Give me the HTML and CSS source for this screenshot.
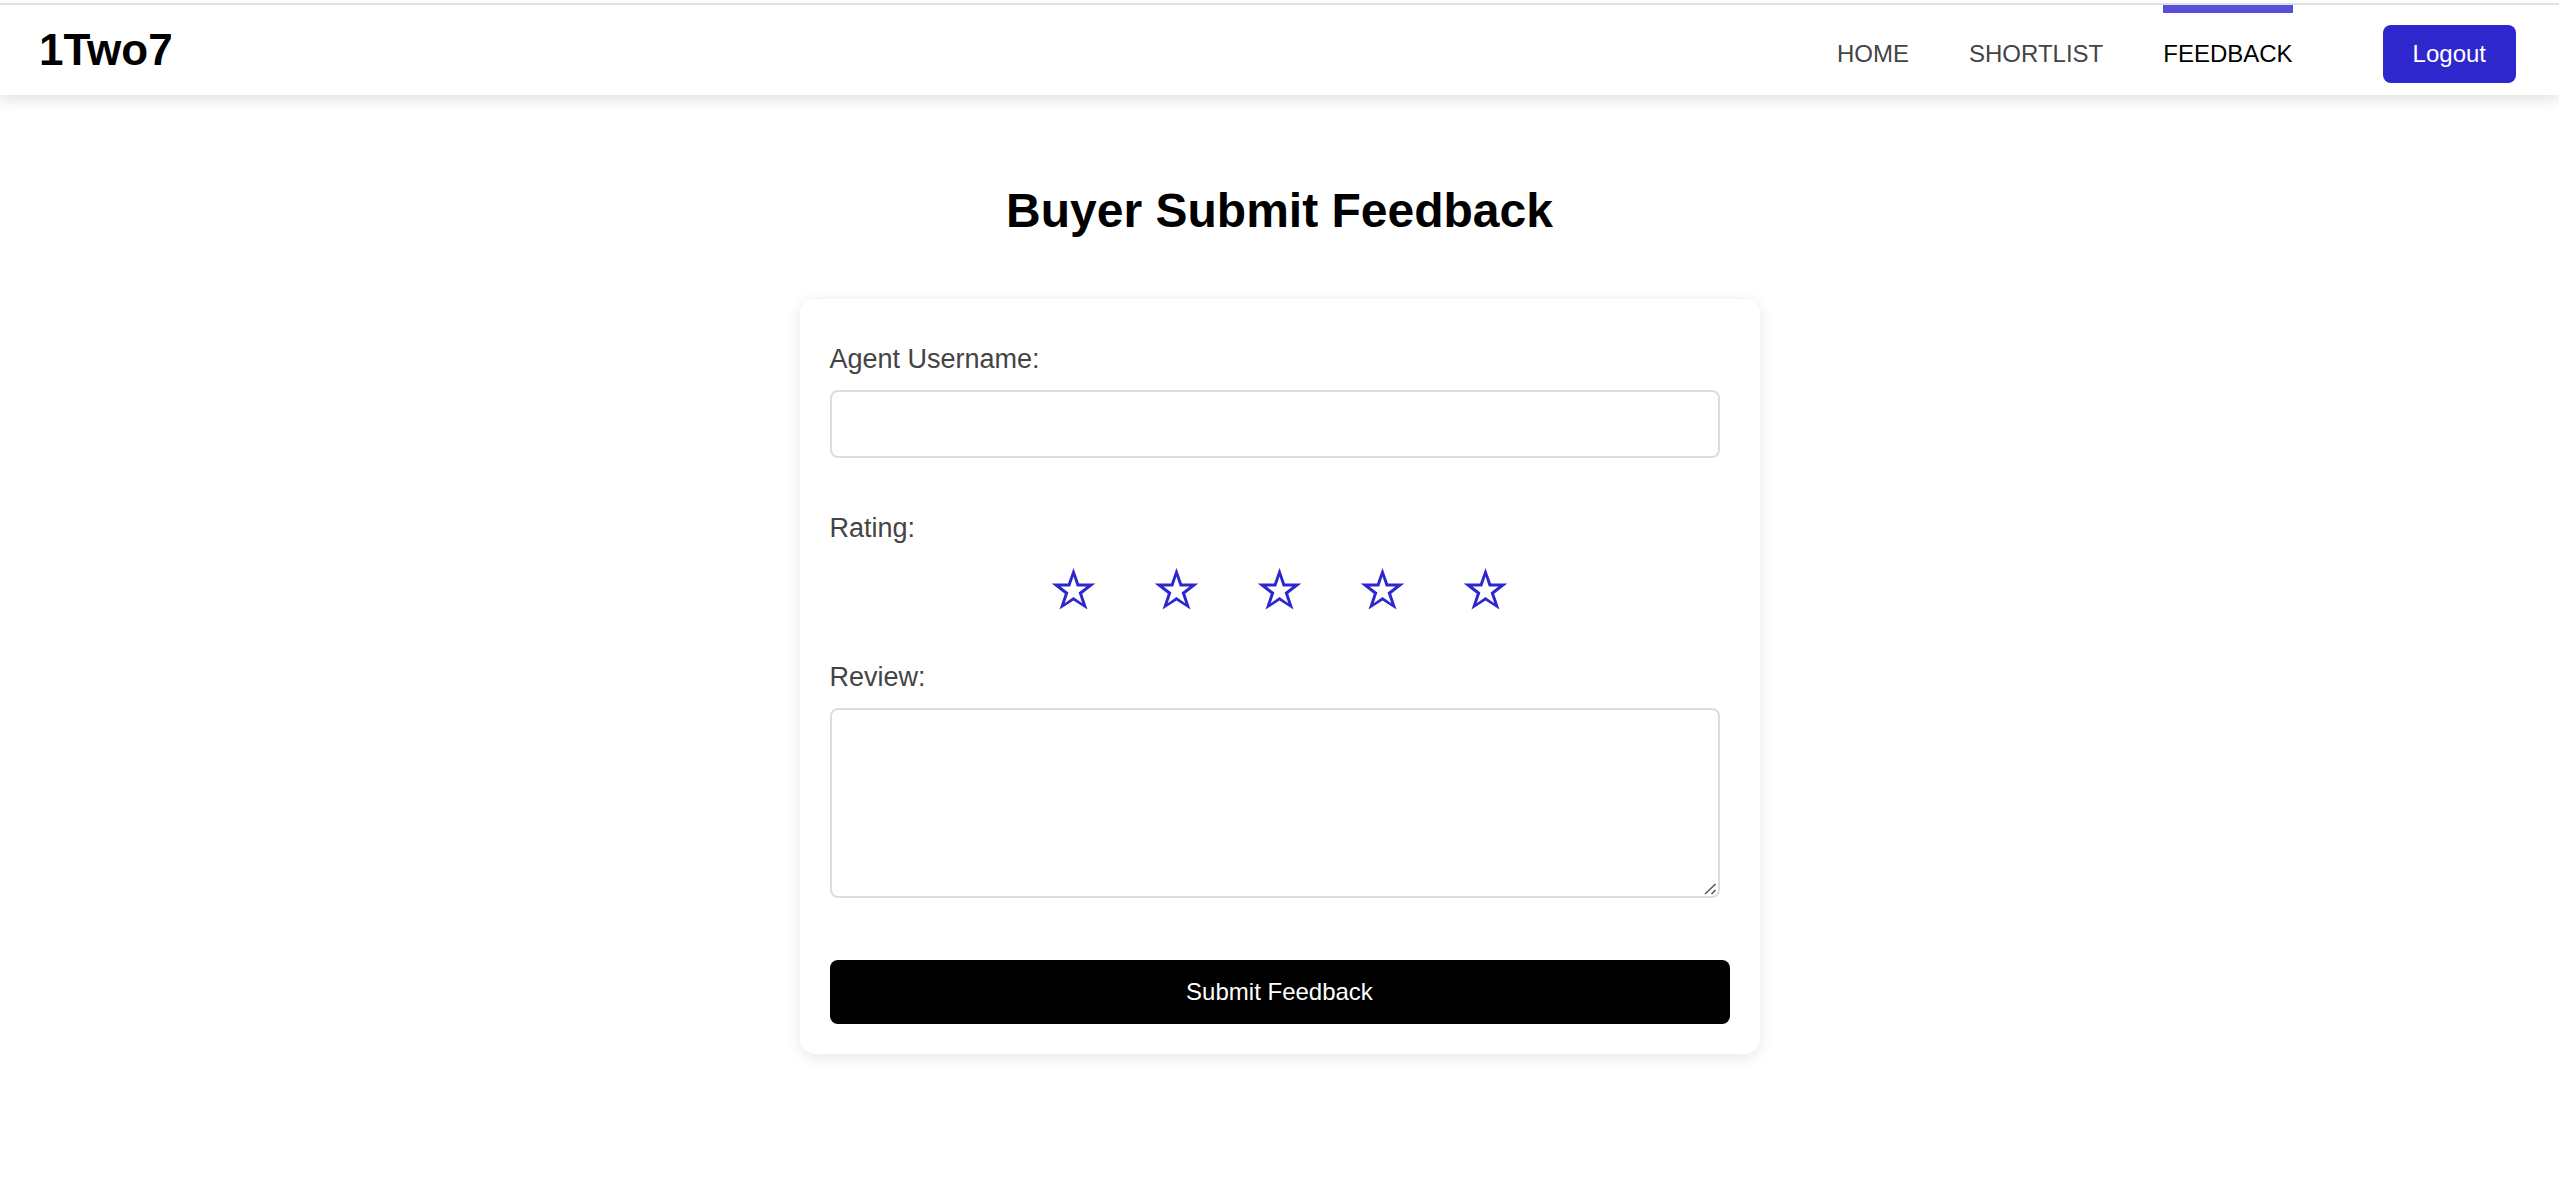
FILE: index.html
```html
<!DOCTYPE html>
<html lang="en">
<head>
  <meta charset="utf-8">
  <meta name="viewport" content="width=device-width, initial-scale=1">
  <title>Buyer Submit Feedback</title>
  <link rel="stylesheet" href="styles.css">
</head>
<body>
  <svg class="sprite" aria-hidden="true">
    <symbol id="star" viewBox="0 0 43 42">
      <path fill-rule="evenodd" d="M21.500 0L27 15.600H43.300L30.200 25.700L35.500 41.600L21.500 32.500L7.500 41.600L12.800 25.700L-.3 15.600H16ZM21.500 8.500L18.200 18.600H8.500L16.400 24.600L12.700 35.300L21.500 29.100L30.300 35.300L26.600 24.600L34.500 18.600H24.800Z"/>
    </symbol>
  </svg>

  <header class="site-header">
    <a class="logo" href="#">1Two7</a>
    <nav class="site-nav">
      <a class="nav-link" href="#">HOME</a>
      <a class="nav-link" href="#">SHORTLIST</a>
      <a class="nav-link nav-link-active" href="#" aria-current="page">FEEDBACK</a>
    </nav>
    <button class="logout" type="button">Logout</button>
  </header>

  <main class="page">
    <h1 class="page-title">Buyer Submit Feedback</h1>
    <form class="card">
      <div class="field">
        <label class="label" for="agent">Agent Username:</label>
        <input class="control" type="text" id="agent" name="agent">
      </div>
      <fieldset class="field rating">
        <legend class="label">Rating:</legend>
        <div class="stars">
          <label class="star"><input class="star-input" type="radio" name="rating" value="1" aria-label="1 star"><svg class="star-icon"><use href="#star"/></svg></label>
          <label class="star"><input class="star-input" type="radio" name="rating" value="2" aria-label="2 stars"><svg class="star-icon"><use href="#star"/></svg></label>
          <label class="star"><input class="star-input" type="radio" name="rating" value="3" aria-label="3 stars"><svg class="star-icon"><use href="#star"/></svg></label>
          <label class="star"><input class="star-input" type="radio" name="rating" value="4" aria-label="4 stars"><svg class="star-icon"><use href="#star"/></svg></label>
          <label class="star"><input class="star-input" type="radio" name="rating" value="5" aria-label="5 stars"><svg class="star-icon"><use href="#star"/></svg></label>
        </div>
      </fieldset>
      <div class="field field-last">
        <label class="label" for="review">Review:</label>
        <textarea class="control control-area" id="review" name="review"></textarea>
      </div>
      <button class="submit" type="submit">Submit Feedback</button>
    </form>
  </main>
</body>
</html>
```
FILE: styles.css
```css
* {
  box-sizing: border-box;
}

body {
  margin: 0;
  padding-top: 3px;
  background: #fff;
  color: #000;
  font-family: "Liberation Sans", Arial, sans-serif;
  font-size: 24px;
  line-height: 28px;
}

button,
input,
textarea {
  font: inherit;
}

.sprite {
  display: none;
}

.site-header {
  display: flex;
  align-items: center;
  height: 92px;
  padding: 0 43px 0 39px;
  border-top: 2px solid #e0e0e0;
  box-shadow: 0 6px 12px rgba(0, 0, 0, 0.1);
}

.logo {
  margin-right: auto;
  color: #000;
  font-size: 44px;
  font-weight: 700;
  line-height: 52px;
  text-decoration: none;
}

.site-nav {
  display: flex;
  align-self: stretch;
  gap: 60px;
  margin-right: 90px;
}

.nav-link {
  display: flex;
  align-items: center;
  border-top: 8px solid transparent;
  color: #444;
  text-decoration: none;
}

.nav-link-active {
  border-top-color: #5850d8;
  color: #000;
}

.logout {
  margin-top: 8px;
  padding: 15px 30px;
  border: 0;
  border-radius: 8px;
  background: #2f27ce;
  color: #fff;
}

.page {
  display: flex;
  flex-direction: column;
  align-items: center;
  padding: 88px 30px;
}

.page-title {
  margin: 0 0 60px;
  font-size: 48px;
  line-height: 56px;
  text-align: center;
}

.card {
  width: 100%;
  max-width: 960px;
  padding: 44px 30px 30px;
  border-radius: 15px;
  box-shadow: 0 3px 15px rgba(0, 0, 0, 0.1);
}

.field {
  display: flex;
  flex-direction: column;
  margin: 0 10px 54px 0;
  padding: 0;
  border: 0;
}

.field-last {
  margin-bottom: 62px;
}

.label {
  margin-bottom: 15px;
  padding: 0;
  color: #444;
  font-size: 27px;
  line-height: 32px;
}

.control {
  width: 100%;
  height: 68px;
  padding: 15px;
  border: 2px solid #ddd;
  border-radius: 8px;
  background: #fff;
}

.control-area {
  display: block;
  height: 190px;
  resize: vertical;
}

.control-area::-webkit-resizer {
  background: url("data:image/svg+xml,%3Csvg xmlns='http://www.w3.org/2000/svg' width='15' height='15'%3E%3Cpath d='M2 13L12.500 3M8.500 13L12.500 9' stroke='%23555' stroke-width='1.5' fill='none'/%3E%3C/svg%3E") right bottom no-repeat;
}

.rating {
  display: block;
  margin: 0 0 51px;
}

.stars {
  display: flex;
  justify-content: center;
  gap: 60px;
  padding-top: 9px;
}

.star {
  position: relative;
  display: block;
  cursor: pointer;
}

.star-input {
  position: absolute;
  inset: 0;
  width: 100%;
  height: 100%;
  margin: 0;
  opacity: 0;
  cursor: pointer;
}

.star-icon {
  display: block;
  width: 43px;
  height: 42px;
  overflow: visible;
  fill: #2f27ce;
}

.submit {
  display: block;
  width: 100%;
  padding: 18px 30px;
  border: 0;
  border-radius: 8px;
  background: #000;
  color: #fff;
}
```
